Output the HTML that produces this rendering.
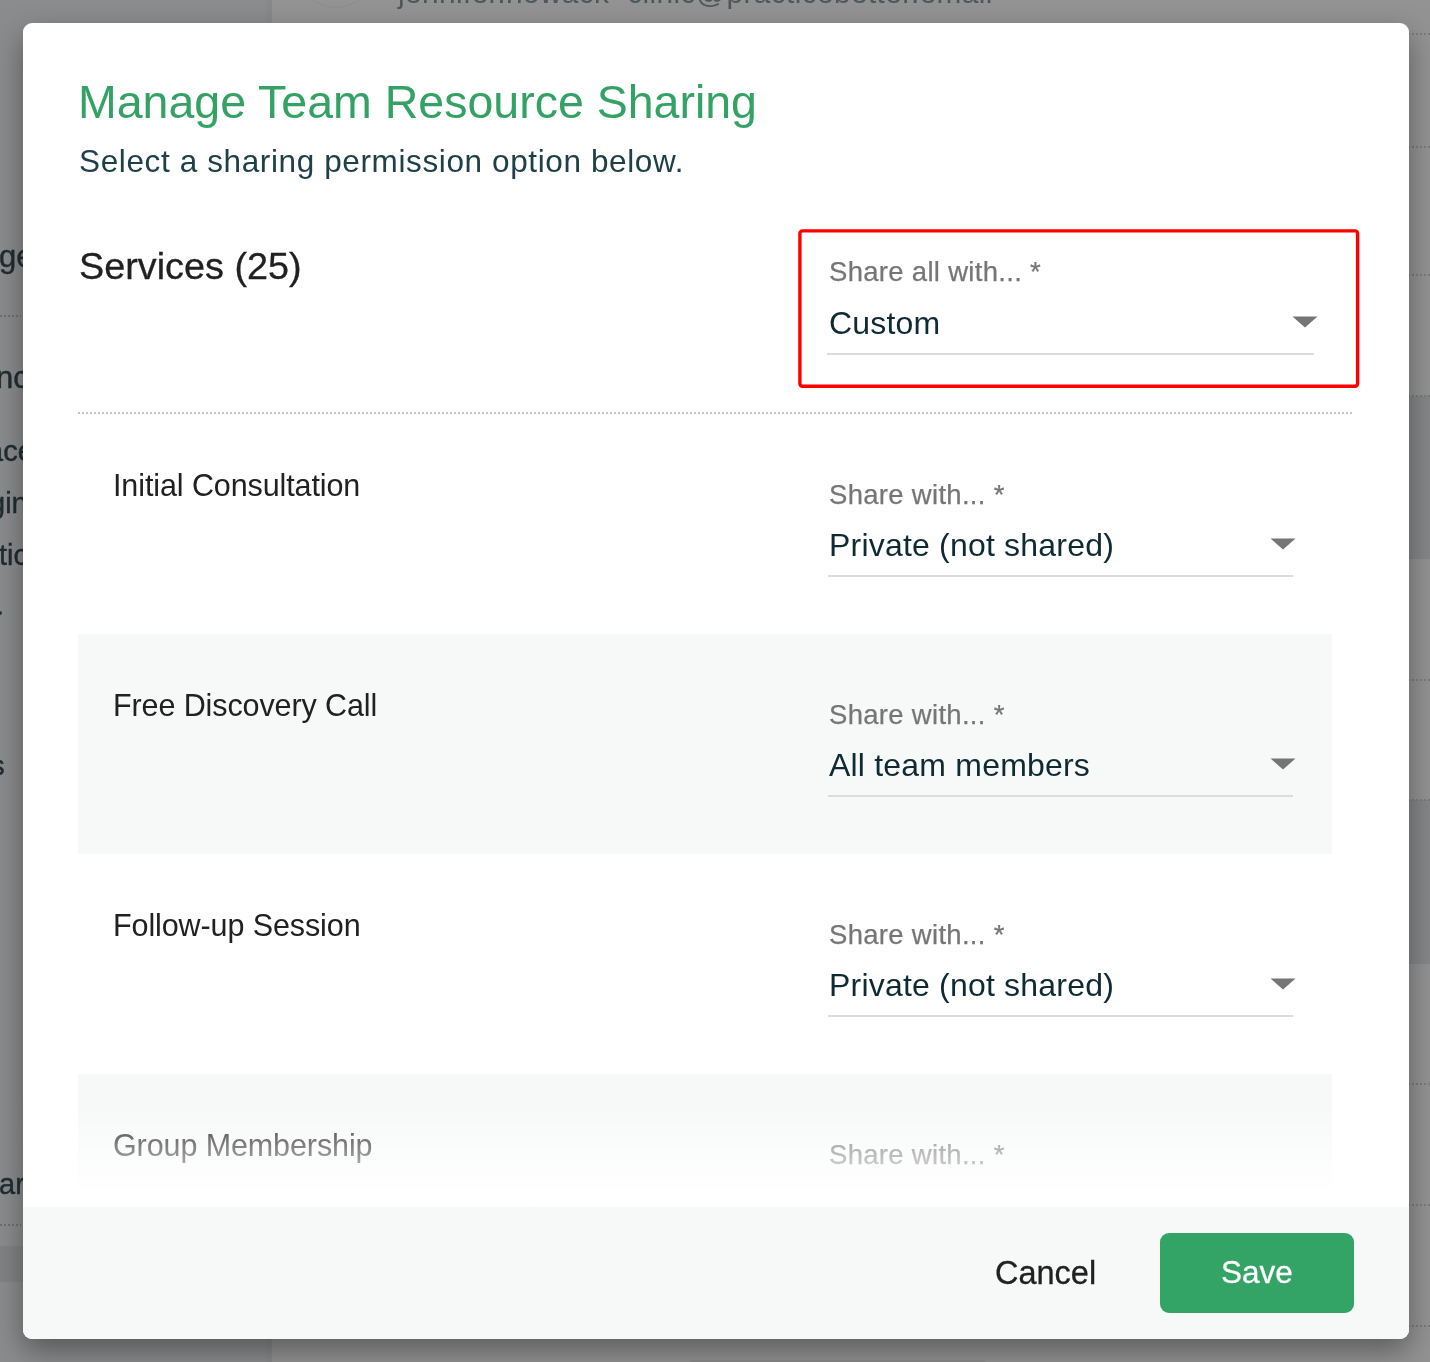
<!DOCTYPE html>
<html><head><meta charset="utf-8">
<style>
*{margin:0;padding:0;box-sizing:border-box}
html,body{width:1430px;height:1362px;overflow:hidden}
body{position:relative;background:#939393;font-family:"Liberation Sans",sans-serif}
.abs{position:absolute;white-space:nowrap;line-height:1}
#side{position:absolute;left:0;top:0;width:272px;height:1362px;background:#8b8c8d}
.sbt{position:absolute;white-space:nowrap;line-height:1;will-change:transform;color:#1f2d31;-webkit-text-stroke:0.4px #1f2d31}
.sdot{position:absolute;left:0;width:21px;height:2px;background-image:linear-gradient(90deg,#6e7172 50%,transparent 50%);background-size:4px 2px}
.mdot{position:absolute;left:272px;width:1158px;height:2px;background-image:linear-gradient(90deg,#7a7c7c 50%,transparent 50%);background-size:4px 2px}
#modal{position:absolute;left:23px;top:23px;width:1386px;height:1316px;background:#fff;border-radius:9px;overflow:hidden;box-shadow:0 12px 30px rgba(0,0,0,.38)}
.t{position:absolute;white-space:nowrap;line-height:1;will-change:transform}
.row{position:absolute;left:55px;width:1254px;height:220px}
.gray{background:#f7f9f8}
.lbl{color:#767676;font-size:27.5px;letter-spacing:0.3px;-webkit-text-stroke:0.25px #767676}
.val{color:#0f2a33;font-size:32px;letter-spacing:0.2px}
.name{color:#212121;font-size:30.5px;letter-spacing:-0.1px}
.ul{position:absolute;height:2px;background:#dcdcdc}
.tri{position:absolute;width:26px;height:12px}
#footer{position:absolute;left:0;top:1184px;width:1386px;height:132px;background:#f7f8f8}
#fade{position:absolute;left:0;top:1076px;width:1386px;height:108px;background:linear-gradient(rgba(255,255,255,0),#fff)}
</style></head><body>
<div id="bg">
  <div id="side"></div>
  <div class="sbt" style="left:-1px;top:241px;font-size:31px">ge</div>
  <div class="sdot" style="top:315px"></div>
  <div class="sbt" style="left:-4px;top:362px;font-size:31px">nc</div>
  <div class="sbt" style="left:-13px;top:437px;font-size:29px">ace</div>
  <div class="sbt" style="left:-11px;top:489px;font-size:29px">gin</div>
  <div class="sbt" style="left:-1px;top:541px;font-size:29px">tic</div>
  <div style="position:absolute;left:-2px;top:611px;width:4px;height:4px;background:#26353a;border-radius:2px"></div>
  <div class="sbt" style="left:-9px;top:753px;font-size:27px;-webkit-text-stroke:0.6px #1f2d31">s</div>
  <div class="sbt" style="left:-1px;top:1170px;font-size:29px">ar</div>
  <div class="sdot" style="top:1224px"></div>
  <div style="position:absolute;left:0;top:1246px;width:272px;height:36px;background:rgba(0,0,0,.06)"></div>
  <div style="position:absolute;left:266px;top:0;width:6px;height:1362px;background:rgba(0,0,0,.018)"></div>
  <div class="mdot" style="top:33px"></div>
  <div class="mdot" style="top:146px"></div>
  <div class="mdot" style="top:274px"></div>
  <div style="position:absolute;left:272px;top:396px;width:1158px;height:163px;background:#858788"></div>
  <div class="mdot" style="top:395px"></div>
  <div class="mdot" style="top:679px"></div>
  <div style="position:absolute;left:272px;top:800px;width:1158px;height:164px;background:#858788"></div>
  <div class="mdot" style="top:799px"></div>
  <div class="mdot" style="top:1083px"></div>
  <div class="mdot" style="top:1204px"></div>
  <div class="mdot" style="top:1325px"></div>
  <div style="position:absolute;left:296px;top:-72px;width:80px;height:80px;border:1px solid #8b8e8e;border-radius:50%"></div>
  <div class="sbt" style="left:397.5px;top:-22px;font-size:29.8px;color:#4e585a;-webkit-text-stroke:0;letter-spacing:0.4px">jennifer.nowack+clinic@practicebetter.email</div>
  <div style="position:absolute;left:685px;top:1360px;width:305px;height:30px;background:rgba(0,0,0,.05);border-radius:10px"></div>
</div>
<div id="modal">
  <div class="t" style="left:55px;top:56px;font-size:46.5px;color:#34a265">Manage Team Resource Sharing</div>
  <div class="t" style="left:56px;top:123px;font-size:31.5px;letter-spacing:0.62px;color:#1f4048">Select a sharing permission option below.</div>
  <div class="t" style="left:56px;top:225px;font-size:37.8px;color:#212121;-webkit-text-stroke:0.3px #212121">Services (25)</div>

  <svg style="position:absolute;left:0;top:0" width="1386" height="400"><rect x="776.9" y="207.9" width="557.7" height="155.4" rx="2.5" fill="none" stroke="#ff0000" stroke-width="3.4"/></svg>
  <div class="t lbl" style="left:806px;top:235px">Share all with... *</div>
  <div class="t val" style="left:806px;top:284px">Custom</div>
  <div class="ul" style="left:804px;top:330px;width:487px"></div>
  <svg class="tri" style="left:1268.5px;top:293px" viewBox="0 0 26 12"><polygon points="0.5,0.5 25.5,0.5 13,11.5" fill="#757575"/></svg>

  <div style="position:absolute;left:55px;top:389px;width:1276px;height:2px;background-image:linear-gradient(90deg,#c4c4c4 50%,transparent 50%);background-size:4px 2px"></div>

  <div class="row" style="top:391px">
    <div class="t name" style="left:35px;top:56px">Initial Consultation</div>
    <div class="t lbl" style="left:751px;top:67px">Share with... *</div>
    <div class="t val" style="left:751px;top:115px">Private (not shared)</div>
    <div class="ul" style="left:750px;top:161px;width:465px"></div>
    <svg class="tri" style="left:1191.5px;top:123.5px" viewBox="0 0 26 12"><polygon points="0.5,0.5 25.5,0.5 13,11.5" fill="#757575"/></svg>
  </div>
  <div class="row gray" style="top:611px">
    <div class="t name" style="left:35px;top:56px">Free Discovery Call</div>
    <div class="t lbl" style="left:751px;top:67px">Share with... *</div>
    <div class="t val" style="left:751px;top:115px">All team members</div>
    <div class="ul" style="left:750px;top:161px;width:465px"></div>
    <svg class="tri" style="left:1191.5px;top:123.5px" viewBox="0 0 26 12"><polygon points="0.5,0.5 25.5,0.5 13,11.5" fill="#757575"/></svg>
  </div>
  <div class="row" style="top:831px">
    <div class="t name" style="left:35px;top:56px">Follow-up Session</div>
    <div class="t lbl" style="left:751px;top:67px">Share with... *</div>
    <div class="t val" style="left:751px;top:115px">Private (not shared)</div>
    <div class="ul" style="left:750px;top:161px;width:465px"></div>
    <svg class="tri" style="left:1191.5px;top:123.5px" viewBox="0 0 26 12"><polygon points="0.5,0.5 25.5,0.5 13,11.5" fill="#757575"/></svg>
  </div>
  <div class="row gray" style="top:1051px;height:114px">
    <div class="t name" style="left:35px;top:56px">Group Membership</div>
    <div class="t lbl" style="left:751px;top:67px">Share with... *</div>
  </div>
  <div id="fade"></div>
  <div id="footer">
    <div class="t" style="left:972px;top:49.5px;font-size:32.5px;-webkit-text-stroke:0.3px #212121;color:#212121">Cancel</div>
    <div style="position:absolute;left:1137px;top:26px;width:194px;height:80px;background:#33a466;border-radius:9px"></div>
    <div class="t" style="left:1198px;top:50px;font-size:31.5px;color:#fff;-webkit-text-stroke:0.3px #fff">Save</div>
  </div>
</div>
</body></html>
